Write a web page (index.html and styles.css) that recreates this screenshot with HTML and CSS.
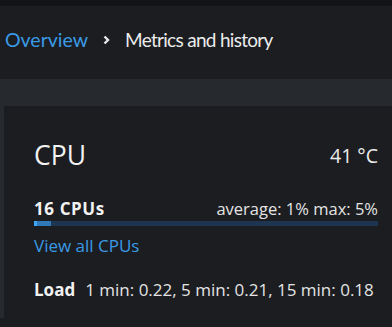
FILE: index.html
```html
<!DOCTYPE html>
<html lang="en">
<head>
<meta charset="utf-8">
<link rel="stylesheet" href="styles.css">
</head>
<body>
<div class="topbar"></div>
<nav class="breadcrumb">
  <a class="crumb-link" href="#">Overview</a>
  <svg class="crumb-sep" width="8" height="12" viewBox="0 0 8 12"><path d="M1.5 2.5 L5 6 L1.5 9.5" fill="none" stroke="#e8e8e8" stroke-width="2.4"/></svg>
  <span class="crumb-current">Metrics and history</span>
</nav>
<section class="page">
  <div class="card">
    <div class="card-head">
      <h2 class="card-title">CPU</h2>
      <span class="temp">41 °C</span>
    </div>
    <div class="usage-row">
      <span class="cpus">16 CPUs</span>
      <span class="avg">average: 1% max: 5%</span>
    </div>
    <div class="bar"><div class="bar-fill" style="width:5%"><div class="bar-tip"></div></div></div>
    <a class="view-link" href="#">View all CPUs</a>
    <div class="load-row"><span class="load-label">Load</span><span class="load-val">1 min: 0.22, 5 min: 0.21, 15 min: 0.18</span></div>
  </div>
</section>
</body>
</html>
```
FILE: styles.css
```css
html, body { margin: 0; padding: 0; }
body {
  background: #1b1d21;
  font-family: "Open Sans", "Noto Sans", sans-serif;
  color: #e0e0e0;
  width: 392px;
  height: 327px;
  overflow: hidden;
}
.topbar { height: 6px; background: #121417; }
.breadcrumb {
  height: 67px;
  padding-bottom: 6px;
  display: flex;
  align-items: center;
  padding-left: 5px;
  font-family: "Lato", "Open Sans", sans-serif;
  font-size: 19.5px;
}
.crumb-link { color: #3a9ae6; text-decoration: none; }
.crumb-sep { margin: 0 14px 0 15px; }
.crumb-current { color: #ececec; font-size: 19px; letter-spacing: -0.7px; }
.page {
  background: #26292d;
  padding: 27px 0 0 4px;
}
.card {
  background: #1b1d21;
  padding: 32px 14px 16px 30px;
}
.card-head {
  display: flex;
  justify-content: space-between;
  align-items: center;
}
.card-title { margin: 0; font-size: 26.5px; font-weight: 400; color: #f2f2f2; line-height: 34px; }
.temp { font-size: 19.5px; color: #ececec; }
.usage-row {
  display: flex;
  justify-content: space-between;
  align-items: baseline;
  margin-top: 26px;
  font-size: 16.5px;
  line-height: 22px;
}
.cpus { font-weight: 700; color: #f2f2f2; font-size: 17px; letter-spacing: 0.6px; }
.avg { color: #e4e4e4; }
.bar {
  margin-top: 1px;
  height: 5px;
  background: #1d3550;
}
.bar-fill { height: 100%; background: #2f79b8; }
.bar-tip { width: 3px; height: 100%; background: #3ea6f5; }
.view-link {
  display: block;
  margin-top: 8px;
  color: #3a9ae6;
  text-decoration: none;
  font-size: 17px;
  line-height: 24px;
}
.load-row { margin-top: 20px; font-size: 17px; line-height: 24px; }
.load-label { font-weight: 700; color: #f2f2f2; margin-right: 10px; }
.load-val { color: #e4e4e4; }
```
